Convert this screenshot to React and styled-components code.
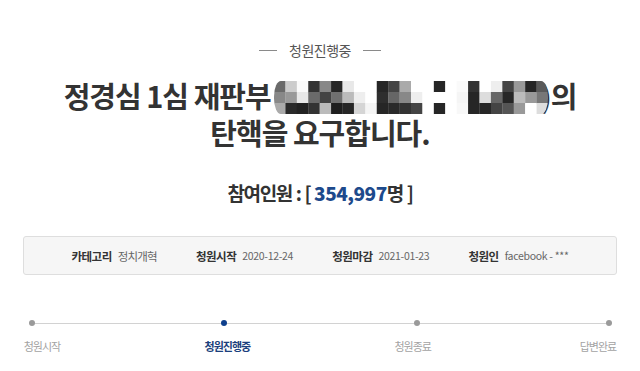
import React from "react";
import styled, { createGlobalStyle } from "styled-components";

const GlobalStyle = createGlobalStyle`
  html, body {
    margin: 0;
    padding: 0;
    background: #ffffff;
  }
  body {
    font-family: "Noto Sans CJK KR", "Noto Sans", sans-serif;
    color: #333333;
  }
`;

const Page = styled.div`
  width: 640px;
  height: 371px;
  overflow: hidden;
  padding-top: 41px;
  box-sizing: border-box;
  display: flex;
  flex-direction: column;
  align-items: center;
`;

const Status = styled.div`
  display: flex;
  align-items: center;
  gap: 12px;
  font-size: 14px;
  line-height: 18px;
  letter-spacing: -0.5px;
  color: #555555;
  &::before,
  &::after {
    content: "";
    width: 18px;
    height: 1px;
    background: #8a8a8a;
  }
`;

const Title = styled.h1`
  margin: 18px 0 0;
  font-size: 29px;
  line-height: 37px;
  font-weight: 700;
  letter-spacing: -1px;
  color: #333333;
  text-align: center;
  white-space: nowrap;
`;

const Mosaic = styled.svg`
  display: inline-block;
  vertical-align: -6px;
  width: 274px;
  height: 33px;
  margin: 0 -7px 0 3px;
  position: relative;
  z-index: 1;
  filter: blur(0.4px);
`;

const Count = styled.div`
  margin-top: 30px;
  font-size: 19px;
  line-height: 24px;
  font-weight: 700;
  letter-spacing: -1.4px;
  word-spacing: 1px;
  color: #333333;
  strong {
    color: #1d4a8c;
    letter-spacing: -0.5px;
  }
`;

const InfoBox = styled.div`
  margin-top: 31px;
  width: 594px;
  height: 39px;
  box-sizing: border-box;
  background: #f6f6f6;
  border: 1px solid #dedede;
  border-radius: 3px;
  display: flex;
  justify-content: center;
  align-items: center;
  gap: 39px;
`;

const InfoItem = styled.div`
  display: flex;
  align-items: center;
  gap: 6px;
  font-size: 11.5px;
  line-height: 14px;
  white-space: nowrap;
`;

const InfoLabel = styled.span`
  font-weight: 700;
  color: #333333;
  letter-spacing: -0.5px;
`;

const InfoValue = styled.span`
  color: #666666;
  font-size: ${(p) => (p.$latin ? "10.5px" : "11.5px")};
  letter-spacing: ${(p) => (p.$latin ? "-0.3px" : "-0.8px")};
`;

const Timeline = styled.div`
  margin-top: 45px;
  width: 616px;
  display: flex;
  flex-direction: column;
  gap: 13px;
`;

const Track = styled.div`
  display: flex;
  align-items: center;
  padding: 0 16px 0 17px;
`;

const Dot = styled.span`
  flex: none;
  width: 6px;
  height: 6px;
  border-radius: 50%;
  background: ${(p) => (p.$active ? "#0e3f8c" : "#9a9a9a")};
`;

const Segment = styled.span`
  flex: 1;
  height: 1px;
  background: #d2d2d2;
`;

const Labels = styled.div`
  display: flex;
  justify-content: space-between;
`;

const StepLabel = styled.span`
  width: 60px;
  text-align: center;
  font-size: 11px;
  line-height: 14px;
  letter-spacing: -1px;
  white-space: nowrap;
  font-weight: ${(p) => (p.$active ? 700 : 400)};
  color: ${(p) => (p.$active ? "#1b3f7d" : "#a3a3a3")};
`;

const MOSAIC = [
  ["#6a6a6a", "#888", "#aaa"],
  ["#ccc", "#999", "#2a2a2a"],
  ["#fafafa", "#e8e8e8", "#222"],
  ["#333", "#6a6a6a", "#333"],
  ["#888", "#444", "#bbb"],
  ["#262626", "#707070", "#1e1e1e"],
  ["#e8e8e8", "#bbb", "#262626"],
  ["#fff", "#eee", "#d5d5d5"],
  ["#fff", "#fff", "#f5f5f5"],
  ["#262626", "#2e2e2e", "#262626"],
  ["#444", "#666", "#2a2a2a"],
  ["#aaa", "#888", "#333"],
  ["#fff", "#eee", "#444"],
  ["#fff", "#fff", "#fff"],
  ["#262626", "#fff", "#262626"],
  ["#fff", "#fff", "#fff"],
  ["#fafafa", "#f5f5f5", "#f8f8f8"],
  ["#333", "#262626", "#262626"],
  ["#fff", "#ddd", "#262626"],
  ["#eee", "#666", "#444"],
  ["#444", "#262626", "#555"],
  ["#999", "#bbb", "#999"],
  ["#262626", "#999", "#fff"],
  ["#5a5a5a", "#777", "#ddd"],
];

function NameMosaic() {
  return (
    <Mosaic viewBox="0 0 24 3" preserveAspectRatio="none" aria-hidden="true">
      <defs>
        <clipPath id="mosaic-clip">
          <rect x="0" y="0" width="24" height="3" rx="0.6" ry="1.4" />
        </clipPath>
      </defs>
      <g clipPath="url(#mosaic-clip)">
        {MOSAIC.map((col, x) =>
          col.map((c, y) => (
            <rect key={`${x}-${y}`} x={x} y={y} width="1.02" height="1.02" fill={c} />
          ))
        )}
      </g>
    </Mosaic>
  );
}

const info = [
  { label: "카테고리", value: "정치개혁" },
  { label: "청원시작", value: "2020-12-24", latin: true },
  { label: "청원마감", value: "2021-01-23", latin: true },
  { label: "청원인", value: "facebook - ***", latin: true },
];

const steps = ["청원시작", "청원진행중", "청원종료", "답변완료"];
const current = 1;

export default function App() {
  return (
    <>
      <GlobalStyle />
      <Page>
        <Status>청원진행중</Status>
        <Title>
          정경심 1심 재판부
          <NameMosaic />
          )의
          <br />
          탄핵을 요구합니다.
        </Title>
        <Count>
          참여인원 : [ <strong>354,997</strong>명 ]
        </Count>
        <InfoBox>
          {info.map((item) => (
            <InfoItem key={item.label}>
              <InfoLabel>{item.label}</InfoLabel>
              <InfoValue $latin={item.latin}>{item.value}</InfoValue>
            </InfoItem>
          ))}
        </InfoBox>
        <Timeline>
          <Track>
            {steps.map((s, i) => (
              <React.Fragment key={s}>
                {i > 0 && <Segment />}
                <Dot $active={i === current} />
              </React.Fragment>
            ))}
          </Track>
          <Labels>
            {steps.map((s, i) => (
              <StepLabel key={s} $active={i === current}>
                {s}
              </StepLabel>
            ))}
          </Labels>
        </Timeline>
      </Page>
    </>
  );
}
